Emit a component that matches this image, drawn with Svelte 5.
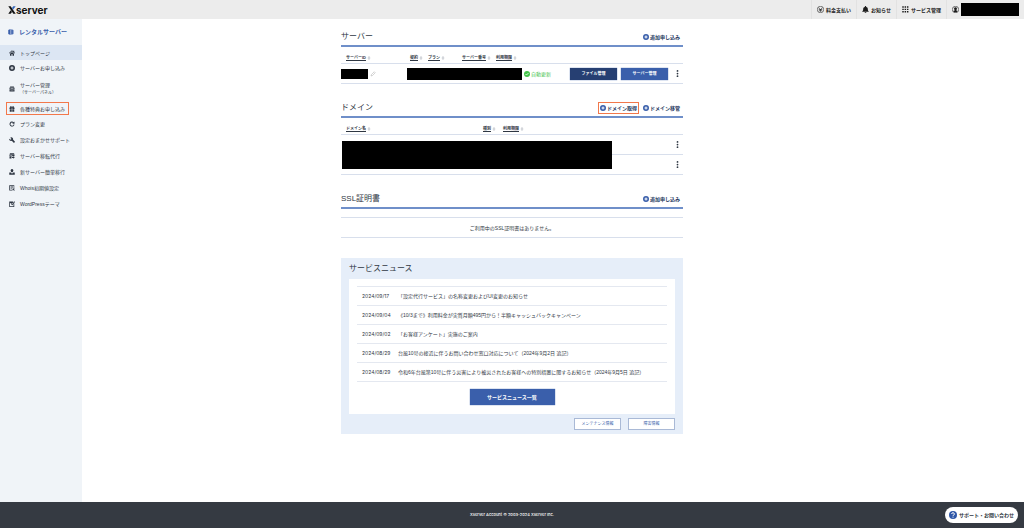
<script lang="ts">
  interface NavItem {
    icon: string;
    label: string;
    sub?: string;
    active?: boolean;
    marked?: boolean;
  }

  const nav: NavItem[] = [
    { icon: "home", label: "トップページ", active: true },
    { icon: "plus", label: "サーバーお申し込み" },
    { icon: "server", label: "サーバー管理", sub: "（サーバーパネル）" },
    { icon: "gift", label: "各種特典お申し込み", marked: true },
    { icon: "refresh", label: "プラン変更" },
    { icon: "wrench", label: "設定おまかせサポート" },
    { icon: "move", label: "サーバー移転代行" },
    { icon: "upload", label: "新サーバー簡単移行" },
    { icon: "list", label: "Whois初期値設定" },
    { icon: "edit", label: "WordPressテーマ" },
  ];

  const tools = [
    { icon: "yen", label: "料金支払い" },
    { icon: "bell", label: "お知らせ" },
    { icon: "grid", label: "サービス管理" },
  ];

  const news = [
    { date: "2024/09/17", title: "「設定代行サービス」の名称変更およびUI変更のお知らせ" },
    { date: "2024/09/04", title: "《10/3まで》利用料金が実質月額495円から！半額キャッシュバックキャンペーン" },
    { date: "2024/09/02", title: "「お客様アンケート」実施のご案内" },
    { date: "2024/08/29", title: "台風10号の接近に伴うお問い合わせ窓口対応について（2024年9月2日 追記）" },
    { date: "2024/08/29", title: "令和6年台風第10号に伴う災害により被災されたお客様への特別措置に関するお知らせ（2024年9月5日 追記）" },
  ];
</script>

{#snippet icon(name: string)}
  <svg class="icon" viewBox="0 0 24 24" fill="currentColor" aria-hidden="true">
    {#if name === "home"}
      <path d="M12 1 0 12l2 2 10-9 10 9 2-2-3-3V3h-4v3zM12 8l-8 7v8h6v-7h4v7h6v-8z" />
    {:else if name === "plus"}
      <path fill-rule="evenodd" d="M12 0a12 12 0 1 0 0 24 12 12 0 0 0 0-24zm-2 6h4v4h4v4h-4v4h-4v-4H6v-4h4z" />
    {:else if name === "server"}
      <path fill-rule="evenodd" d="M5 2h14l3 5H2zM2 8h20v6H2zm0 7h20v7H2zm4 3v1h12v-1zM6 10v2h12v-2z" />
    {:else if name === "gift"}
      <path d="M2 6h3a3 3 0 0 1 3-5c2 0 3 2 4 3 1-1 2-3 4-3a3 3 0 0 1 3 5h3v6h-9V6h-2v6H2zM3 13h8v10H3zm10 0h8v10h-8z" />
    {:else if name === "refresh"}
      <path d="M19 5l3-3v9h-9l3-3a6 6 0 1 0 2 6h4A10 10 0 1 1 19 5z" />
    {:else if name === "wrench"}
      <path d="M9 1a7 7 0 0 1 7 9l8 9-4 5-9-9A7 7 0 0 1 1 7l5 4 4-3-5-5z" />
    {:else if name === "move"}
      <path fill-rule="evenodd" d="M4 1h16l2 5H2zM2 7h20v6H2zm3 2v2h8V9zM2 14h8v8H2zm10 2h5v-3l6 5-6 5v-3h-5z" />
    {:else if name === "upload"}
      <path d="M12 0a6 6 0 0 1 4 10l-1 3H9l-1-3a6 6 0 0 1 4-10zM1 14h7v3h8v-3h7v9H1z" />
    {:else if name === "list"}
      <path fill-rule="evenodd" d="M1 1h20v12h-2V4H4v15h8v3H1zm5 5h11v2H6zm0 4h11v2H6zm0 4h6v2H6zm8 0h8v3h-3l4 4-2 2-4-4v3h-3z" />
    {:else if name === "edit"}
      <path fill-rule="evenodd" d="M1 2h16l-2 4H4v15h14v-9l3-3v15H1zM21 1l3 3-11 13-7-7 3-2 4 4zM4 6h12v2H4z" />
    {:else if name === "yen"}
      <circle cx="12" cy="12" r="11" fill="none" stroke="currentColor" stroke-width="2" />
      <path d="M6 6l6 7 6-7M6 12h12M7 16h10M12 12v8" fill="none" stroke="currentColor" stroke-width="2" />
    {:else if name === "bell"}
      <path d="M12 0a2 2 0 0 1 2 3c5 1 6 4 6 8 0 4 1 5 3 7v2H1v-2c2-2 3-3 3-7 0-4 1-7 6-8a2 2 0 0 1 2-3zM9 21h6a3 3 0 0 1-6 0z" />
    {:else if name === "grid"}
      <path d="M1 1h5v5H1zm8 0h5v5H9zm8 0h5v5h-5zM1 9h5v5H1zm8 0h5v5H9zm8 0h5v5h-5zM1 17h5v5H1zm8 0h5v5H9zm8 0h5v5h-5z" />
    {:else if name === "user"}
      <circle cx="12" cy="12" r="11" fill="none" stroke="currentColor" stroke-width="2" />
      <path d="M12 4a5 5 0 0 1 3 9v2l4 2-3 4H8l-4-4 5-2v-2a5 5 0 0 1 3-9z" />
    {:else if name === "check"}
      <circle cx="12" cy="12" r="12" />
      <path d="M6 12l4 4 8-8" fill="none" stroke="#fff" stroke-width="3" />
    {:else if name === "pencil"}
      <path d="M4 20l2-6L17 3l4 4L10 18z" fill="none" stroke="currentColor" stroke-width="2" />
    {:else if name === "question"}
      <circle cx="12" cy="12" r="12" />
      <path d="M8 9a4 4 0 1 1 5 4q-1 1-1 2M12 17v3" fill="none" stroke="#fff" stroke-width="3" />
    {:else if name === "dots"}
      <circle cx="12" cy="3" r="3" /><circle cx="12" cy="12" r="3" /><circle cx="12" cy="21" r="3" />
    {:else if name === "sort"}
      <path d="M12 0l9 10H3zM12 24l9-10H3z" />
    {:else if name === "brand"}
      <path d="M1 4l9-4v24l-9-4z" />
      <path d="M11 1h6l6 4v14l-6 4h-6z" opacity="0.6" />
      <path d="M14 4h5v16h-5z" />
    {/if}
  </svg>
{/snippet}

{#snippet column(label: string)}
  <th scope="col"><button class="sort" type="button"><u>{label}</u>{@render icon("sort")}</button></th>
{/snippet}

{#snippet more()}
  <button class="more" type="button" aria-label="メニュー">{@render icon("dots")}</button>
{/snippet}

<div class="page">
  <header class="topbar">
    <a class="logo" href="#top" aria-label="Xserver">
      <svg class="logo-mark" viewBox="0 0 24 24" aria-hidden="true">
        <path d="M1 1h7l15 22h-7z" fill="#111" />
        <path d="M16 1h7l-8 10-3-5z" fill="#2f62b8" />
        <path d="M8 13l4 5-4 5H1z" fill="#111" />
      </svg>
      <span>server</span>
    </a>
    <nav class="tools" aria-label="アカウント">
      {#each tools as tool (tool.icon)}
        <a href="#{tool.icon}">{@render icon(tool.icon)}{tool.label}</a>
      {/each}
      <a class="account" href="#account" aria-label="アカウント">
        {@render icon("user")}<span class="mask account-mask"></span>
      </a>
    </nav>
  </header>

  <div class="body">
    <aside class="sidebar">
      <h1>{@render icon("brand")}レンタルサーバー</h1>
      <nav aria-label="メニュー">
        {#each nav as item (item.icon)}
          <a href="#{item.icon}" class:active={item.active} class:marked={item.marked}>
            {@render icon(item.icon)}
            <span>
              {item.label}
              {#if item.sub}<small>{item.sub}</small>{/if}
            </span>
          </a>
        {/each}
      </nav>
    </aside>

    <main>
      <section>
        <div class="section-head">
          <h2>サーバー</h2>
          <a href="#add-server">{@render icon("plus")}追加申し込み</a>
        </div>
        <table>
          <colgroup>
            <col class="c-id" /><col class="c-type" /><col class="c-mid" /><col class="c-mid" />
            <col class="c-limit" /><col class="c-auto" /><col />
          </colgroup>
          <thead>
            <tr>
              {@render column("サーバーID")}
              {@render column("契約")}
              {@render column("プラン")}
              {@render column("サーバー番号")}
              {@render column("利用期限")}
              <td></td>
              <td></td>
            </tr>
          </thead>
          <tbody>
            <tr>
              <td>
                <div class="id-cell"><span class="mask id-mask"></span>{@render icon("pencil")}</div>
              </td>
              <td colspan="4"><div class="mask plan-mask"></div></td>
              <td><span class="auto">{@render icon("check")}自動更新</span></td>
              <td>
                <div class="actions">
                  <button class="btn dark" type="button">ファイル管理</button>
                  <button class="btn" type="button">サーバー管理</button>
                  {@render more()}
                </div>
              </td>
            </tr>
          </tbody>
        </table>
      </section>

      <section>
        <div class="section-head">
          <h2>ドメイン</h2>
          <a class="marked" href="#add-domain">{@render icon("plus")}ドメイン取得</a>
          <a href="#move-domain">{@render icon("plus")}ドメイン移管</a>
        </div>
        <table>
          <colgroup>
            <col class="c-name" /><col class="c-kind" /><col class="c-rest" /><col />
          </colgroup>
          <thead>
            <tr>
              {@render column("ドメイン名")}
              {@render column("種別")}
              {@render column("利用期限")}
              <td></td>
            </tr>
          </thead>
          <tbody>
            <tr>
              <td colspan="3" rowspan="2"><div class="mask domain-mask"></div></td>
              <td><div class="actions">{@render more()}</div></td>
            </tr>
            <tr>
              <td><div class="actions">{@render more()}</div></td>
            </tr>
          </tbody>
        </table>
      </section>

      <section>
        <div class="section-head">
          <h2>SSL証明書</h2>
          <a href="#add-ssl">{@render icon("plus")}追加申し込み</a>
        </div>
        <p class="empty">ご利用中のSSL証明書はありません。</p>
      </section>

      <section class="news">
        <h2>サービスニュース</h2>
        <div class="news-box">
          <ul>
            {#each news as entry}
              <li><time>{entry.date}</time><a href="#news">{entry.title}</a></li>
            {/each}
          </ul>
          <button class="btn all" type="button">サービスニュース一覧</button>
        </div>
        <div class="news-links">
          <button type="button">メンテナンス情報</button>
          <button type="button">障害情報</button>
        </div>
      </section>
    </main>
  </div>

  <footer>Xserver Account © 2003-2024 Xserver Inc.</footer>
  <button class="support" type="button">{@render icon("question")}サポート・お問い合わせ</button>
</div>

<style>
  :global(body) {
    margin: 0;
  }
  .page {
    min-height: 100vh;
    display: flex;
    flex-direction: column;
    background: #fff;
    color: #2f3743;
    font-family: "Liberation Sans", "Noto Sans CJK JP", sans-serif;
    font-size: 5px;
    line-height: 8px;
  }
  .page *,
  .page {
    box-sizing: border-box;
  }
  a {
    color: inherit;
    text-decoration: none;
  }
  button {
    font: inherit;
    color: inherit;
    background: none;
    border: 0;
    padding: 0;
    cursor: pointer;
  }
  h1,
  h2,
  p,
  ul {
    margin: 0;
    padding: 0;
  }
  .icon {
    width: 6px;
    height: 6px;
    flex: none;
    display: block;
  }
  .mask {
    display: block;
    background: #000;
  }

  .topbar {
    height: 19px;
    display: flex;
    justify-content: space-between;
    background: #ececec;
    color: #1c1c1c;
  }
  .logo {
    display: flex;
    align-items: center;
    padding-left: 8px;
    font-family: Inter, "Noto Sans", sans-serif;
    font-size: 10px;
    font-weight: 700;
    color: #111;
  }
  .logo-mark {
    width: 8px;
    height: 8px;
  }
  .tools {
    display: flex;
    font-weight: 700;
  }
  .tools a {
    display: flex;
    align-items: center;
    gap: 2px;
    padding: 0 5px;
    border-left: 1px solid #e2e2e2;
  }
  .tools .icon {
    width: 7px;
    height: 7px;
  }
  .account-mask {
    width: 58px;
    height: 13px;
  }

  /* the right track mirrors the sidebar so the column stays centred */
  .body {
    flex: 1;
    display: grid;
    grid-template-columns: 82px 1fr 82px;
  }
  .sidebar {
    background: #f0f4f8;
  }
  .sidebar h1 {
    display: flex;
    align-items: center;
    gap: 5px;
    height: 26px;
    padding-left: 8px;
    font-size: 6px;
    color: #3a5fab;
  }
  .sidebar nav a {
    display: flex;
    align-items: center;
    gap: 5px;
    min-height: 16px;
    padding: 0 8px 0 9px;
    white-space: nowrap;
  }
  .sidebar nav .active {
    min-height: 15px;
    background: #dce6f3;
  }
  .sidebar nav .marked {
    min-height: 13px;
    margin: 1px 13px 1px 6px;
    padding: 0 0 0 2px;
    border: 1px solid #f2784b;
  }
  .sidebar small {
    display: block;
    font-size: 4px;
  }
  .sidebar nav a:has(small) {
    min-height: 25px;
  }

  main {
    width: 342px;
    max-width: 100%;
    margin: 0 auto;
    padding: 8px 0 40px;
  }
  section {
    margin-bottom: 14px;
  }
  .section-head {
    display: flex;
    align-items: center;
    gap: 2px;
    height: 20px;
    padding: 2px 1px 0 0;
    border-bottom: 2px solid #6f8fc9;
  }
  h2 {
    flex: 1;
    font-size: 8px;
    line-height: 12px;
    font-weight: 400;
  }
  .section-head a {
    display: flex;
    align-items: center;
    gap: 1px;
    height: 12px;
    padding: 0 1px;
    font-weight: 700;
    color: #23365c;
    border: 1px solid transparent;
  }
  .section-head .marked {
    border-color: #f2784b;
  }
  .section-head .icon {
    color: #3a5fab;
  }

  table {
    width: 100%;
    margin-top: 6px;
    table-layout: fixed;
    border-collapse: separate;
    border-spacing: 0;
  }
  th,
  td {
    padding: 0;
    border-bottom: 1px solid #d8dfec;
    text-align: left;
    vertical-align: middle;
  }
  thead tr {
    height: 11px;
  }
  tbody tr {
    height: 20px;
  }
  th {
    padding-left: 3px;
    white-space: nowrap;
  }
  th:first-child {
    padding-left: 5px;
  }
  .sort {
    display: flex;
    align-items: center;
    gap: 1px;
    font-size: 4px;
    font-weight: 700;
  }
  .sort .icon {
    width: 4px;
    height: 4px;
    color: #c4c8cf;
  }
  .c-id {
    width: 66px;
  }
  .c-type {
    width: 18px;
  }
  .c-mid {
    width: 34px;
  }
  .c-limit {
    width: 31px;
  }
  .c-auto {
    width: 42px;
  }
  .c-name {
    width: 139px;
  }
  .c-kind {
    width: 20px;
  }
  .c-rest {
    width: 112px;
  }
  .id-cell {
    display: flex;
    align-items: center;
    gap: 2px;
    color: #aaa;
  }
  .id-mask {
    width: 27px;
    height: 10px;
  }
  .plan-mask {
    width: 115px;
    height: 12px;
  }
  .domain-mask {
    height: 28px;
    margin-left: 1px;
  }
  .auto {
    display: flex;
    align-items: center;
    gap: 1px;
    color: #45c34a;
  }
  .actions {
    display: flex;
    justify-content: flex-end;
    align-items: center;
    gap: 4px;
  }
  .btn {
    width: 47px;
    height: 12px;
    font-size: 4px;
    font-weight: 700;
    color: #fff;
    background: #3a5fab;
    box-shadow: 0 0 1px #3a5fab;
  }
  .btn.dark {
    background: #263f72;
  }
  .more {
    width: 11px;
    display: flex;
    justify-content: center;
  }
  .more .icon {
    width: 7px;
    height: 7px;
  }

  .empty {
    margin-top: 8px;
    padding: 6px 0 5px;
    text-align: center;
    border: solid #d8dfec;
    border-width: 1px 0;
  }

  .news {
    margin: 20px 0 0;
    padding: 5px 8px 4px;
    background: #e6eef9;
  }
  .news-box {
    margin-top: 4px;
    padding: 7px 8px 9px;
    background: #fff;
  }
  .news ul {
    list-style: none;
    border-top: 1px solid #e4e8f0;
  }
  .news li {
    display: flex;
    gap: 9px;
    padding: 5px;
    border-bottom: 1px solid #e4e8f0;
    white-space: nowrap;
  }
  .news time {
    width: 27px;
    font-family: Inter, sans-serif;
  }
  .all {
    display: block;
    width: 85px;
    height: 16px;
    margin: 7px auto 0;
    font-size: 5px;
  }
  .news-links {
    display: flex;
    justify-content: flex-end;
    gap: 7px;
    padding-top: 4px;
  }
  .news-links button {
    width: 47px;
    height: 12px;
    font-size: 4px;
    color: #3a5fab;
    background: #fff;
    border: 1px solid #a9b9d6;
  }

  footer {
    height: 26px;
    display: flex;
    align-items: center;
    justify-content: center;
    background: #353a42;
    color: #fff;
    font-family: Inter, sans-serif;
    font-size: 4px;
    font-weight: 500;
  }
  .support {
    position: fixed;
    right: 6px;
    bottom: 5px;
    display: flex;
    align-items: center;
    gap: 2px;
    height: 16px;
    padding: 0 4px;
    border-radius: 8px;
    background: #fff;
    font-weight: 700;
  }
  .support .icon {
    width: 8px;
    height: 8px;
    color: #3058a8;
  }
</style>
